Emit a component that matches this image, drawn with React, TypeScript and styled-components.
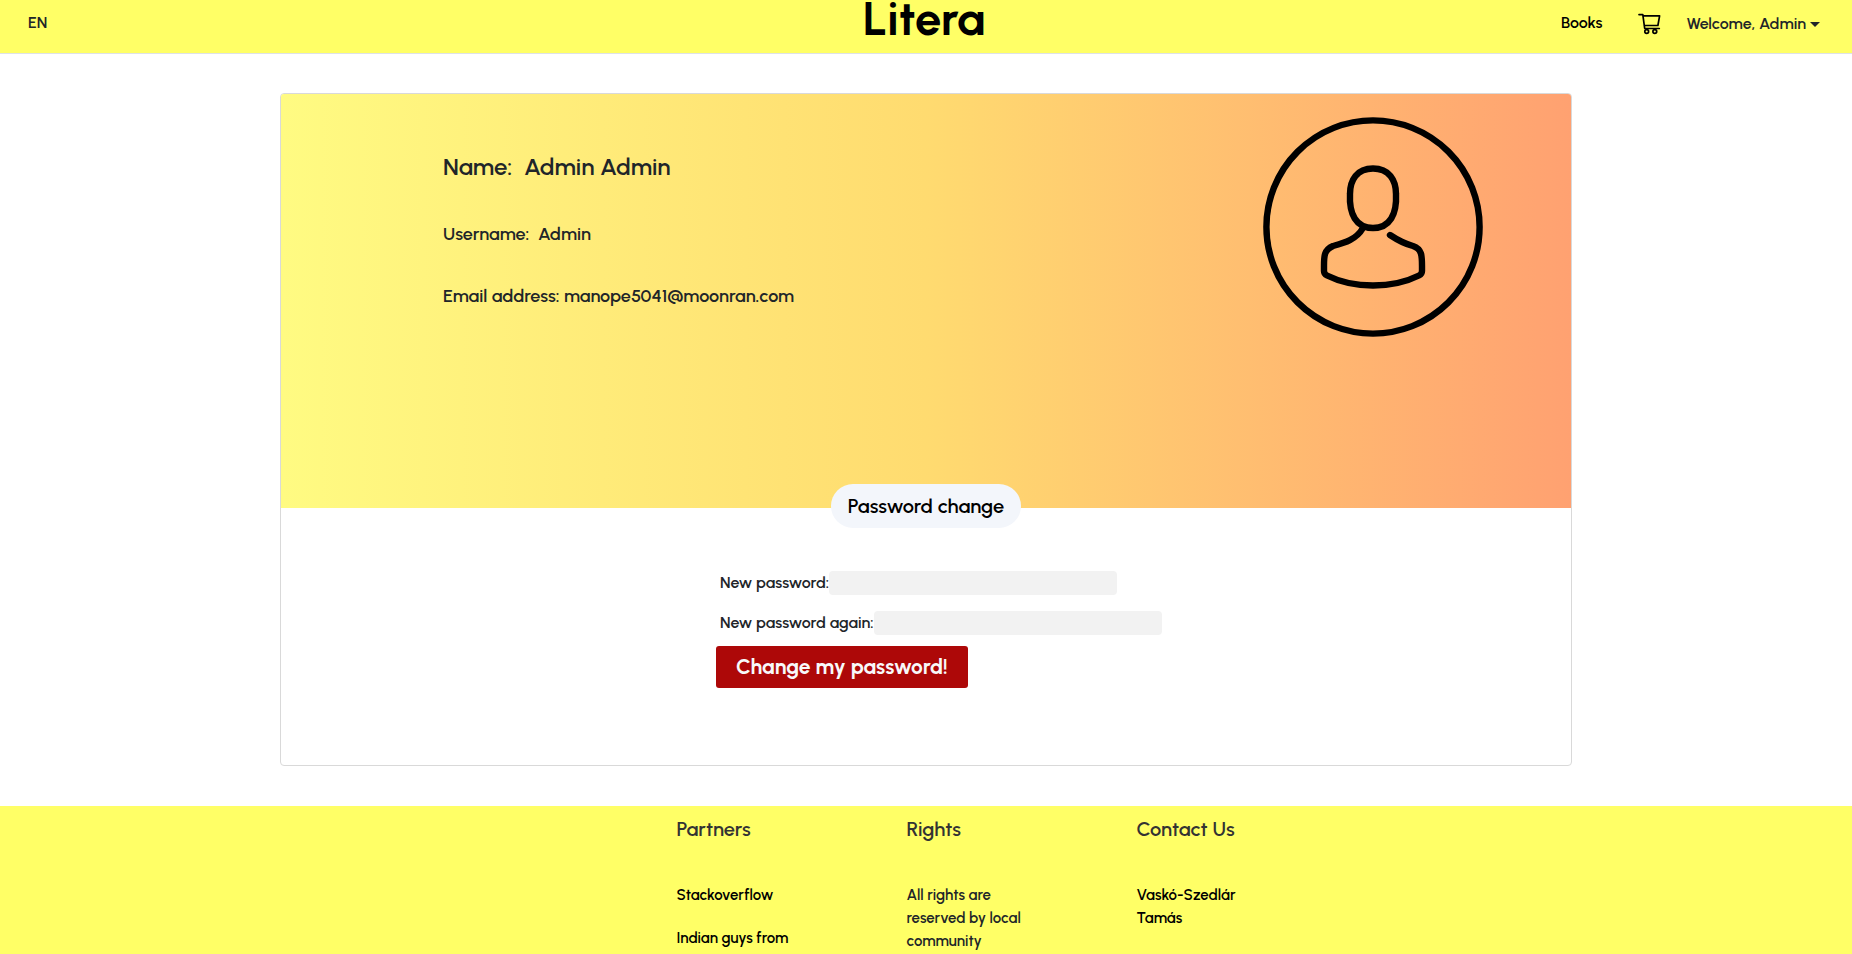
import React from 'react';
import styled, { createGlobalStyle } from 'styled-components';

const Global = createGlobalStyle`
  *, *::before, *::after { box-sizing: border-box; }
  body {
    margin: 0;
    background: #fff;
    color: #212529;
    font-family: Urbanist, Lato, "Liberation Sans", sans-serif;
    font-size: 16px;
    font-weight: 600;
    line-height: 24px;
  }
  h1, h2, h3, p, ul { margin: 0; padding: 0; }
`;

const Page = styled.div`
  display: flex;
  flex-direction: column;
  height: 100vh;
  overflow-x: hidden;
  overflow-y: auto;
  scrollbar-width: none;
`;

const Header = styled.header`
  flex: none;
  display: grid;
  grid-template-columns: 1fr auto 1fr;
  height: 54px;
  padding: 0 32px 0 28px;
  background: #ffff66;
  border-bottom: 1px solid #dee2e6;
`;

const Language = styled.a`
  justify-self: start;
  padding-top: 11px;
  color: #212529;
  text-decoration: none;
`;

const Brand = styled.a`
  color: #000;
  font-size: 47px;
  font-weight: 700;
  line-height: 37px;
  text-decoration: none;
`;

const Nav = styled.nav`
  justify-self: end;
  display: flex;
  align-items: flex-start;
  padding-top: 11px;
`;

const NavLink = styled.a`
  display: flex;
  margin-right: 36px;
  color: #000;
  text-decoration: none;
`;

const CartLink = styled.a`
  display: flex;
  margin: 2px 25px 0 0;
  color: #000;
`;

const AccountButton = styled.button`
  display: flex;
  align-items: center;
  gap: 4px;
  margin-top: 1px;
  padding: 0;
  border: 0;
  background: none;
  color: #212529;
  font: inherit;
  cursor: pointer;
`;

const Caret = styled.span`
  border: 5px solid transparent;
  border-top-color: #212529;
  border-bottom: 0;
`;

const Main = styled.main`
  flex: none;
  width: 100%;
  max-width: 1292px;
  margin: 39px auto 40px;
  border: 1px solid #d9d9d9;
  border-radius: 4px;
`;

const Profile = styled.section`
  display: flex;
  justify-content: space-between;
  min-height: 414px;
  padding: 23px 88px 0 162px;
  border-radius: 3px 3px 0 0;
  background: linear-gradient(to right, #fffb82, #ffdb70 50%, #ffa171);
`;

const Details = styled.div`
  display: flex;
  flex-direction: column;
  padding-top: 36px;
  font-size: 18px;
`;

const FullName = styled.h2`
  margin-bottom: 41px;
  font-size: 24px;
  font-weight: 600;
  line-height: 28px;
  white-space: pre;
`;

const Detail = styled.p`
  margin-bottom: 38px;
  white-space: pre;
`;

const Avatar = styled.svg`
  flex: none;
  width: 220px;
  height: 220px;
  fill: none;
  stroke: #000;
  stroke-linecap: round;
  stroke-linejoin: round;
`;

const PasswordPanel = styled.section`
  display: flex;
  flex-direction: column;
  align-items: center;
  min-height: 257px;
`;

const Pill = styled.h3`
  margin-top: -24px;
  padding: 10px 17px;
  border-radius: 22px;
  background: #f3f6fb;
  color: #000;
  font-size: 20px;
  font-weight: 600;
  line-height: 24px;
`;

const Form = styled.form`
  display: flex;
  flex-direction: column;
  align-items: flex-start;
  gap: 16px;
  width: 420px;
  margin-top: 43px;
`;

const Field = styled.div`
  display: flex;
  padding-left: 4px;
  white-space: nowrap;
`;

const Input = styled.input`
  width: 288px;
  height: 24px;
  padding: 0 8px;
  border: 0;
  border-radius: 4px;
  background: #f2f2f2;
  font: inherit;
`;

const Submit = styled.button`
  height: 42px;
  margin-top: -5px;
  padding: 0 20px;
  border: 0;
  border-radius: 3px;
  background: #ad0808;
  color: #f8f9fa;
  font-family: inherit;
  font-size: 21px;
  font-weight: 700;
  line-height: 24px;
  cursor: pointer;
`;

const Footer = styled.footer`
  flex: none;
  display: flex;
  justify-content: center;
  gap: 110px;
  padding: 11px 0 40px 81px;
  background: #ffff66;
  font-size: 15px;
  line-height: 23px;
`;

const FooterColumn = styled.section`
  width: 120px;
`;

const FooterTitle = styled.h3`
  margin-bottom: 43px;
  color: #333;
  font-size: 20px;
  font-weight: 600;
  line-height: 24px;
`;

const FooterLink = styled.a`
  display: block;
  margin-bottom: 20px;
  color: #000;
  text-decoration: none;
`;

export default function App() {
  return (
    <>
      <Global />
      <Page>
        <Header>
          <Language href="#en">EN</Language>
          <Brand href="#home">Litera</Brand>
          <Nav>
            <NavLink href="#books">Books</NavLink>
            <CartLink href="#cart" aria-label="Cart">
              <svg width="23" height="22" viewBox="0 0 23 22" fill="none" stroke="currentColor" strokeWidth="1.7" strokeLinecap="round" strokeLinejoin="round">
                <path d="M1 1.6h3.800l1.900 13.900h14.600M5 2.800h16.600l-1.700 9.700H6.200" />
                <circle cx="8.700" cy="18.500" r="1.900" />
                <circle cx="16.800" cy="18.500" r="1.900" />
              </svg>
            </CartLink>
            <AccountButton type="button">
              Welcome, Admin
              <Caret />
            </AccountButton>
          </Nav>
        </Header>

        <Main>
          <Profile>
            <Details>
              <FullName>{'Name:  Admin Admin'}</FullName>
              <Detail>{'Username:  Admin'}</Detail>
              <Detail>Email address: manope5041@moonran.com</Detail>
            </Details>
            <Avatar viewBox="0 0 220 220" strokeWidth="6.4" aria-hidden="true">
              <circle cx="110" cy="110" r="106.6" />
              <path d="M110 51.5C94 51.5 87 63 87 77C86 97 93 111 110 111C127 111 134 97 133 77C133 63 126 51.5 110 51.5Z" />
              <path d="M100 111C93 123 81 126 70 129C61 133 61 139 61 149V154Q61 157 64 158.500Q84 168.500 110 168.500Q136 168.500 156 158.500Q159 157 159 154V149C159 139 159 132 150 129Q139 126 127 118" />
            </Avatar>
          </Profile>

          <PasswordPanel>
            <Pill>Password change</Pill>
            <Form onSubmit={(e) => e.preventDefault()}>
              <Field>
                <label htmlFor="new-password">New password:</label>
                <Input id="new-password" type="password" />
              </Field>
              <Field>
                <label htmlFor="new-password-again">New password again:</label>
                <Input id="new-password-again" type="password" />
              </Field>
              <Submit type="submit">Change my password!</Submit>
            </Form>
          </PasswordPanel>
        </Main>

        <Footer>
          <FooterColumn>
            <FooterTitle>Partners</FooterTitle>
            <FooterLink href="#stackoverflow">Stackoverflow</FooterLink>
            <FooterLink href="#indian-guys">Indian guys from</FooterLink>
          </FooterColumn>
          <FooterColumn>
            <FooterTitle>Rights</FooterTitle>
            <p>All rights are reserved by local community</p>
          </FooterColumn>
          <FooterColumn>
            <FooterTitle>Contact Us</FooterTitle>
            <FooterLink href="#contact">Vaskó-Szedlár Tamás</FooterLink>
          </FooterColumn>
        </Footer>
      </Page>
    </>
  );
}
